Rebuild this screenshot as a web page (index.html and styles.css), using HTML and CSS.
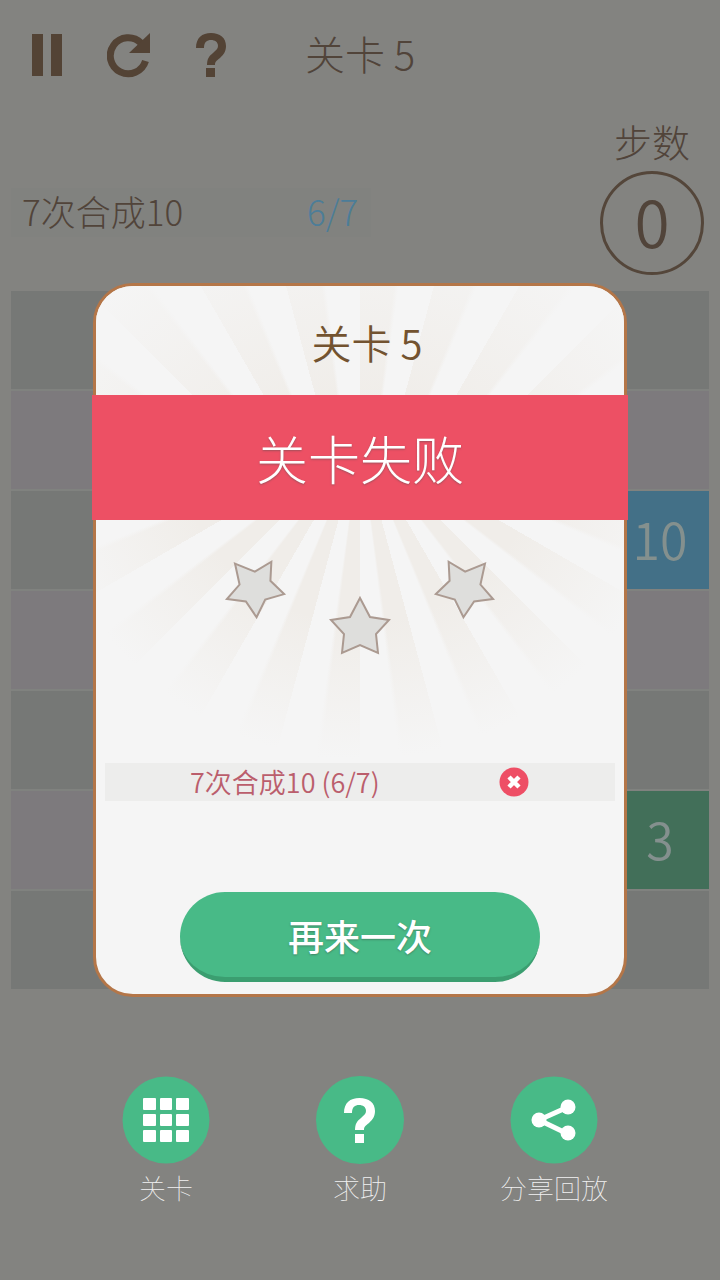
FILE: index.html
```html
<!DOCTYPE html>
<html lang="zh-CN">
<head>
<meta charset="utf-8">
<meta name="viewport" content="width=device-width, initial-scale=1">
<title>关卡 5</title>
<link rel="stylesheet" href="styles.css">
</head>
<body>
<div class="screen">
  <main class="game">
    <header class="toolbar">
      <button class="tool" aria-label="暂停"><svg width="30" height="42" viewBox="0 0 30 42"><path d="M0 0h11v42H0zM19 0h11v42H19z"/></svg></button>
      <button class="tool" aria-label="重新开始"><svg width="44" height="46" viewBox="0 0 44 46"><path d="M38.500 29A18 18 0 1 1 34 11" fill="none" stroke="currentColor" stroke-width="7"/><path d="M43 1v20H22z"/></svg></button>
      <button class="tool" aria-label="帮助"><svg width="30" height="44" viewBox="0 0 30 44"><path d="M0 15C0 5 6 0 15 0s15 5 15 13c0 6-3 9-6 12-4 3-5 4-5 7h-8c0-6 2-9 6-12 3-3 5-4 5-7 0-4-3-6-7-6s-7 2-7 8zM10 35h9v9h-9z"/></svg></button>
      <h1 class="level">关卡 5</h1>
    </header>
    <section class="status">
      <div class="goal"><span>7次合成10</span><span class="goal-count">6/7</span></div>
      <div class="steps"><span class="steps-label">步数</span><span class="steps-value">0</span></div>
    </section>
    <section class="board">
      <div class="row"></div>
      <div class="row odd"></div>
      <div class="row"><span class="tile blue">10</span></div>
      <div class="row odd"></div>
      <div class="row"></div>
      <div class="row odd"><span class="tile green">3</span></div>
      <div class="row"></div>
    </section>
  </main>

  <div class="overlay">
    <section class="dialog" role="dialog" aria-labelledby="dialog-title">
      <h2 class="dialog-title" id="dialog-title">关卡 5</h2>
      <p class="banner">关卡失败</p>
      <div class="stars">
        <svg class="star left" viewBox="0 0 60 60"><path d="M30 2l10 19 19 3-13 14 2 19-18-8-18 8 2-19L1 24l19-3z"/></svg>
        <svg class="star middle" viewBox="0 0 60 60"><path d="M30 2l10 19 19 3-13 14 2 19-18-8-18 8 2-19L1 24l19-3z"/></svg>
        <svg class="star right" viewBox="0 0 60 60"><path d="M30 2l10 19 19 3-13 14 2 19-18-8-18 8 2-19L1 24l19-3z"/></svg>
      </div>
      <div class="result">
        <span>7次合成10 (6/7)</span>
        <svg class="fail" viewBox="0 0 30 30"><circle cx="15" cy="15" r="14.500" fill="#ee4e65"/><path d="M10 10l10 10M20 10L10 20" stroke="#fff" stroke-width="4.500"/></svg>
      </div>
      <button class="retry">再来一次</button>
    </section>

    <nav class="menu">
      <button class="menu-item">
        <svg class="disc" viewBox="0 0 88 88"><circle cx="44" cy="44" r="43.500" fill="#48ba87"/><g fill="#fff"><rect x="21" y="22" width="13" height="12" rx="1"/><rect x="38" y="22" width="12" height="12" rx="1"/><rect x="54" y="22" width="13" height="12" rx="1"/><rect x="21" y="38" width="13" height="12" rx="1"/><rect x="38" y="38" width="12" height="12" rx="1"/><rect x="54" y="38" width="13" height="12" rx="1"/><rect x="21" y="54" width="13" height="12" rx="1"/><rect x="38" y="54" width="12" height="12" rx="1"/><rect x="54" y="54" width="13" height="12" rx="1"/></g></svg>
        <span>关卡</span>
      </button>
      <button class="menu-item">
        <svg class="disc" viewBox="0 0 88 88"><circle cx="44" cy="44" r="44" fill="#48ba87"/><path transform="translate(28 22)" fill="#fff" d="M0 15C0 5 6 0 15.500 0S31 5 31 13c0 6-3 9-6 12-4 3-5 4-5 7h-9c0-6 2-9 6-12 3-3 5-4 5-7 0-4-3-6-7-6s-7 2-7 8zM11 36h9v9h-9z"/></svg>
        <span>求助</span>
      </button>
      <button class="menu-item">
        <svg class="disc" viewBox="0 0 88 88"><circle cx="44" cy="44" r="43.500" fill="#48ba87"/><path d="M58 31L29 44l29 14" fill="none" stroke="#fff" stroke-width="5"/><g fill="#fff"><circle cx="29" cy="44" r="7.500"/><circle cx="58" cy="31" r="7.500"/><circle cx="58" cy="57" r="7.500"/></g></svg>
        <span>分享回放</span>
      </button>
    </nav>
  </div>
</div>
</body>
</html>
```

FILE: styles.css
```css
* { box-sizing: border-box; }
body {
  margin: 0;
  background: #838380;
  color: #51443a;
  font-family: "Noto Sans CJK SC", sans-serif;
}
h1, h2, p { margin: 0; font-weight: 300; }
button {
  padding: 0;
  border: 0;
  background: none;
  color: inherit;
  font-family: inherit;
  cursor: pointer;
}
svg { display: block; }

.screen { position: relative; min-height: 100vh; }

.toolbar {
  display: flex;
  align-items: center;
  height: 110px;
  padding: 0 32px;
}
.tool { margin-right: 45px; color: #534335; fill: currentColor; }
.level {
  margin-left: 34px;
  padding-bottom: 4px;
  font-size: 40px;
  line-height: 56px;
}

.status {
  display: flex;
  align-items: flex-start;
  justify-content: space-between;
  height: 181px;
  padding: 0 16px 0 11px;
}
.goal {
  display: flex;
  align-items: center;
  justify-content: space-between;
  width: 52%;
  height: 49px;
  margin-top: 78px;
  padding: 0 13px 4px 11px;
  background: #81827f;
  font-size: 35px;
  font-weight: 300;
}
.goal-count { color: #4c7d98; }
.steps {
  display: flex;
  flex-direction: column;
  align-items: center;
}
.steps-label {
  font-size: 38px;
  font-weight: 300;
  line-height: 61px;
}
.steps-value {
  display: flex;
  align-items: center;
  justify-content: center;
  width: 104px;
  height: 104px;
  padding-bottom: 6px;
  border: 3px solid #54463a;
  border-radius: 50%;
  font-size: 64px;
  font-weight: 350;
  line-height: 64px;
}

.board {
  display: grid;
  gap: 2px;
  margin: 0 11px;
  background: #80827f;
}
.row {
  display: flex;
  justify-content: flex-end;
  height: 98px;
  background: #767876;
}
.odd { background: #7d7a7d; }
.tile {
  width: 98px;
  padding-bottom: 4px;
  color: #84908e;
  font-size: 50px;
  font-weight: 350;
  line-height: 94px;
  text-align: center;
}
.blue { background: #437087; }
.green { background: #426f59; }

.overlay {
  position: absolute;
  inset: 0;
  display: flex;
  flex-direction: column;
  align-items: center;
  padding: 283px 20px 0;
}
.dialog {
  display: flex;
  flex-direction: column;
  width: 100%;
  max-width: 534px;
  padding-bottom: 12px;
  border: 3px solid #b47648;
  border-radius: 40px;
  background: #f5f5f5;
}
.dialog-title {
  padding: 4px 0 0 14px;
  border-radius: 37px 37px 0 0;
  background:
    radial-gradient(circle at 50% 276px, transparent 160px, #f5f5f5 370px),
    repeating-conic-gradient(from 0deg at 50% 276px, #f0ede9 0deg 7deg, #f5f5f5 8deg 15deg);
  color: #735330;
  font-size: 40px;
  font-weight: 350;
  line-height: 105px;
  text-align: center;
}
.banner {
  margin: 0 -4px;
  background: #ed5064;
  color: #fff;
  font-size: 52px;
  line-height: 125px;
  text-align: center;
  text-shadow: 0 1px 2px #a0505c;
}
.stars {
  display: flex;
  justify-content: center;
  gap: 47px;
  height: 243px;
  padding-top: 35px;
  background:
    radial-gradient(circle at 50% -80px, transparent 180px, #f5f5f5 320px),
    repeating-conic-gradient(from 0deg at 50% -80px, #f0ede9 0deg 7deg, #f5f5f5 8deg 15deg);
}
.star {
  width: 60px;
  height: 60px;
  overflow: visible;
  fill: #dededc;
  stroke: #ab9a91;
  stroke-width: 2;
}
.left { transform: rotate(-40deg); }
.middle { margin-top: 41px; }
.right { transform: rotate(40deg); }
.result {
  display: flex;
  align-items: center;
  justify-content: space-between;
  height: 38px;
  margin: 0 9px;
  padding: 0 86px 0 85px;
  background: #ededec;
  color: #bb5e6c;
  font-size: 27px;
  font-weight: 350;
  line-height: 38px;
}
.fail { width: 30px; height: 30px; }
.retry {
  align-self: center;
  width: 360px;
  height: 90px;
  margin-top: 91px;
  border-bottom: 5px solid #3b9e70;
  border-radius: 45px;
  background: #48ba87;
  color: #fff;
  font-size: 36px;
  font-weight: 500;
  text-shadow: 0 1px 2px #3f8464;
}

.menu {
  display: grid;
  grid-template-columns: repeat(3, 1fr);
  width: 100%;
  max-width: 582px;
  margin-top: 79px;
}
.menu-item {
  display: flex;
  flex-direction: column;
  align-items: center;
  gap: 4px;
  color: #f2f2f2;
  font-size: 27px;
  font-weight: 100;
  line-height: 40px;
}
.disc { width: 88px; height: 88px; }
```
